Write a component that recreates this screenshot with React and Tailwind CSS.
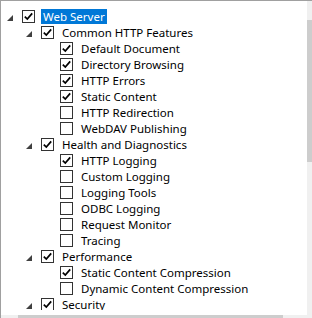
import React from "react";

const rows = [
  { label: "Web Server", level: 0, expand: true, checked: true, selected: true },
  { label: "Common HTTP Features", level: 1, expand: true, checked: true },
  { label: "Default Document", level: 2, checked: true },
  { label: "Directory Browsing", level: 2, checked: true },
  { label: "HTTP Errors", level: 2, checked: true },
  { label: "Static Content", level: 2, checked: true },
  { label: "HTTP Redirection", level: 2, checked: false },
  { label: "WebDAV Publishing", level: 2, checked: false },
  { label: "Health and Diagnostics", level: 1, expand: true, checked: true },
  { label: "HTTP Logging", level: 2, checked: true },
  { label: "Custom Logging", level: 2, checked: false },
  { label: "Logging Tools", level: 2, checked: false },
  { label: "ODBC Logging", level: 2, checked: false },
  { label: "Request Monitor", level: 2, checked: false },
  { label: "Tracing", level: 2, checked: false },
  { label: "Performance", level: 1, expand: true, checked: true },
  { label: "Static Content Compression", level: 2, checked: true },
  { label: "Dynamic Content Compression", level: 2, checked: false },
  { label: "Security", level: 1, expand: true, checked: true },
];

const indent = ["pl-[0px]", "pl-[19px]", "pl-[38px]"];

function Arrow() {
  return (
    <svg width="6" height="6" viewBox="0 0 6 6" className="mt-[3px]">
      <polygon points="6,0 6,6 0,6" fill="#404040" />
    </svg>
  );
}

function Checkbox({ checked }) {
  return (
    <div className="w-[13px] h-[13px] shrink-0 border border-[#333333] bg-white flex items-center justify-center">
      {checked && (
        <svg width="11" height="11" viewBox="0 0 11 11">
          <path d="M1.8 5.6 L4.3 8.1 L9.2 2.4" fill="none" stroke="#000" strokeWidth="1.7" />
        </svg>
      )}
    </div>
  );
}

function Row({ row }) {
  return (
    <div className={`flex items-center h-[16px] ${indent[row.level]}`}>
      <div className="w-[21px] h-[16px] flex items-center pl-[6px] shrink-0">
        {row.expand && <Arrow />}
      </div>
      <Checkbox checked={row.checked} />
      <span
        className={
          "ml-[6px] px-[2px] h-[15px] leading-[15px] mt-[1px] whitespace-nowrap " +
          (row.selected ? "bg-[#0078d7] text-white" : "text-black")
        }
      >
        {row.label}
      </span>
    </div>
  );
}

export default function App() {
  return (
    <div
      className="w-[312px] h-[318px] bg-white border-t border-l border-[#a0a0a0] flex flex-col overflow-hidden text-[11.5px]"
      style={{ fontFamily: '"Segoe UI", "Noto Sans", "Open Sans", sans-serif' }}
    >
      <div className="flex flex-1 min-h-0">
        <div className="flex-1 flex flex-col min-w-0">
          <div className="h-[309px] overflow-hidden pt-[7px]">
            {rows.map((r) => (
              <Row key={r.label} row={r} />
            ))}
          </div>
        </div>
        <div className="w-[5px] bg-[#f0f0f0] flex flex-col">
          <div className="h-[19px]" />
          <div className="h-[142px] bg-[#cdcdcd]" />
        </div>
      </div>
      <div className="h-[3px] flex bg-[#f0f0f0]">
        <div className="w-[17px]" />
        <div className="w-[265px] bg-[#cdcdcd]" />
      </div>
    </div>
  );
}
